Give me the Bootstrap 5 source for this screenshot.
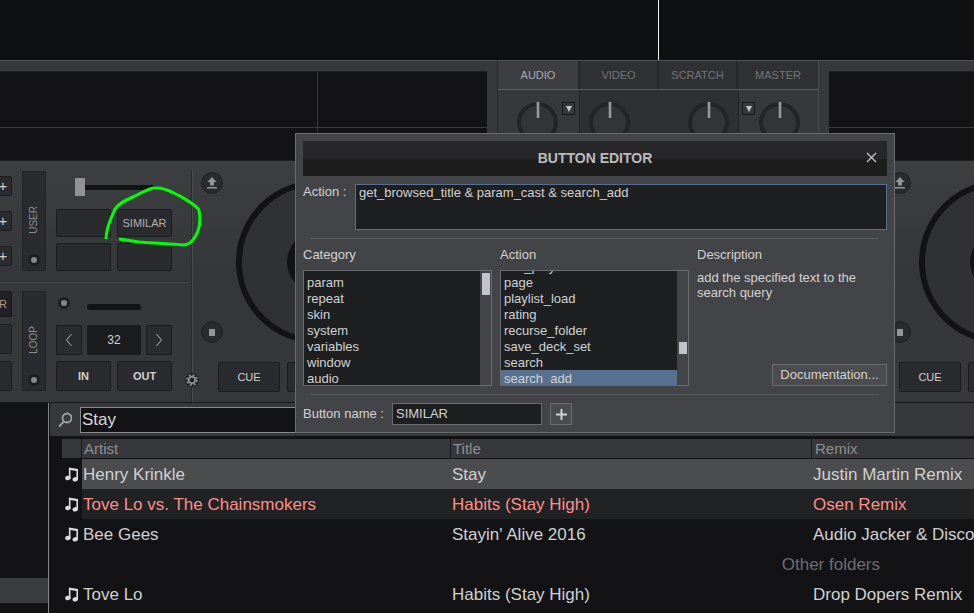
<!DOCTYPE html>
<html lang="en">
<head>
<meta charset="utf-8">
<meta name="viewport" content="width=device-width, initial-scale=1">
<title>Button Editor</title>
<link href="https://cdn.jsdelivr.net/npm/bootstrap@5.3.0/dist/css/bootstrap.min.css" rel="stylesheet">
<style>
  :root { --panel:#37383b; --well:#131315; --key:#2a2b2e; --edge:#1b1c1d; --field:#1d1f21; --rim:#6a6b6e; }
  body { font-family:"Liberation Sans",Arial,sans-serif; font-size:13px; line-height:16px; color:#d0d0d0; background:#131315; }
  button, input, textarea { font-family:inherit; }
  .app { min-height:100vh; overflow:hidden; }

  .waveform { height:60px; background:#0f1012; }
  .wave-gap { flex:658 1 0; border-right:1px solid #f0f0f0; }
  .wave-rest { flex:315 1 0; }

  .top-row { display:grid; grid-template-columns:minmax(0,487fr) 342px minmax(0,145fr); height:101px; border-top:1px solid #515255; background:var(--panel); }
  .screen { margin-top:10px; background:var(--well); border-top:1px solid #1f2022; border-bottom:1px solid #1f2022; }
  .screen-main { height:56px; border-bottom:1px solid #38393c; }
  .screen-split { flex:317 1 0; border-right:1px solid #38393c; }
  .screen-end { flex:169 1 0; }
  .mixer { margin:0 10px; border-left:1px solid #28292b; border-right:1px solid #4b4c4f; }
  .mix-tabs { height:29px; border-bottom:1px solid #5b5c5f; display:grid; grid-template-columns:82fr 79fr 79fr 80fr; }
  .mix-tab { border:0; border-right:2px solid #27282a; border-radius:0; background:#303134; color:#737476; font-size:11px; padding:0; }
  .mix-tab.active { background:#3d3e41; color:#aaabad; }
  .mix-tab:last-child { border-right:0; }
  .mix-body { height:70px; padding-top:12px; overflow:hidden; }
  .mix-side { width:81px; padding:0 4px; gap:4px; }
  .mix-side.mix-side-end { width:79px; padding:0 3px; }
  .mix-mid { background:#2f3033; border-left:1px solid #222325; border-right:1px solid #222325; margin-top:-12px; padding:12px 9px 0; }
  .dial { width:41px; height:41px; flex:none; border-radius:50%; border:4px solid #232426; background:#333437; display:flex; justify-content:center; }
  .dial-mark { width:4px; height:16px; margin-top:-4px; background:#98999b; border:solid #4f5052; border-width:0 1px; }
  .drop { width:13px; height:13px; border:1px solid #18191a; background:#37383a; padding:0; display:flex; align-items:center; justify-content:center; }

  .deck-row { display:grid; grid-template-columns:minmax(0,881fr) minmax(0,93fr); height:242px; border-bottom:1px solid #18191a; background:linear-gradient(#3d3e40,#353639 50%,#37383b); overflow:hidden; }
  .controls { width:193px; flex:none; padding-top:8px; }
  .controls-inner { height:233px; border-right:1px solid #4a4b4e; box-shadow:inset -1px 0 #2a2b2d; }
  .bank { height:112px; padding-top:2px; gap:10px; }
  .bank-loop { border-top:1px solid #4a4b4e; box-shadow:0 -1px #2a2b2d; height:121px; padding-top:8px; margin-top:1px; }
  .key { background:var(--key); border:1px solid var(--edge); border-radius:2px; color:#d0d0d0; font-size:11px; line-height:12px; padding:0; display:flex; align-items:center; justify-content:center; }
  .stubs { width:18px; height:100px; margin-left:-6px; }
  .stubs.plus-stubs { gap:15px; padding-top:5px; }
  .stubs .key { height:20px; font-size:15px; }
  .stubs .key.tall { height:30px; }
  .stubs .key.lit { height:26px; font-size:11px; background:#202123; border-color:#18191a; color:#b8958c; }
  .strip { width:24px; height:100px; background:var(--key); border:1px solid #222325; color:#8c8d8f; font-size:10px; gap:20px; padding-bottom:4px; }
  .strip span { writing-mode:vertical-rl; transform:rotate(180deg); line-height:12px; }
  .led { width:12px; height:12px; border-radius:50%; border:3px solid #1d1e1f; background:#858688; flex:none; }
  .pads { width:116px; height:100px; }
  .fader { appearance:none; width:78px; height:18px; margin:7px 0 0 19px; background:linear-gradient(#131315,#131315) center/100% 5px no-repeat; }
  .fader::-webkit-slider-thumb { appearance:none; width:10px; height:18px; background:#929294; }
  .pad-grid { display:grid; grid-template-columns:1fr 1fr; gap:6px; }
  .pad-grid .key { height:28px; color:#aeafb1; }
  .pad-grid .key.big { height:30px; font-weight:bold; color:#d0d0d0; }
  .loop-top { padding:6px 0 0 2px; gap:17px; margin-bottom:15px; }
  .slot { width:54px; height:6px; margin-top:7px; border-radius:3px; background:#131315; }
  .loop-grid { display:grid; grid-template-columns:26px 54px 26px; gap:5px; margin-bottom:6px; }
  .loop-grid .key { height:30px; }
  .loop-grid .size-key { font-size:12px; background:#1b1c1e; }
  .gear { width:14px; flex:none; margin-left:-8px; padding-bottom:15px; z-index:1; }

  .transport { padding-top:11px; }
  .transport.left-side { padding-left:2px; }
  .transport.right-side { padding-left:8px; }
  .side { height:171px; width:22px; flex:none; }
  .round { width:22px; height:22px; border-radius:50%; border:1px solid #1f2022; background:var(--key); padding:0; display:flex; align-items:center; justify-content:center; }
  .stop { width:6px; height:7px; background:#949597; }
  .jog { width:164px; height:164px; flex:none; border-radius:50%; border:6px solid #131315; background:#303134; display:flex; align-items:center; justify-content:center; margin:8px 0 0 13px; }
  .right-side .jog { margin-left:8px; }
  .hub { width:62px; height:62px; border-radius:50%; background:#131315; }
  .cue-row { margin:18px 0 0 17px; gap:7px; }
  .right-side .cue-row { margin-left:10px; }
  .cue-row .key { width:62px; height:30px; flex:none; }

  .library { min-height:210px; flex:1 1 auto; }
  .tree { width:49px; flex:none; border-right:1px solid #85868a; padding-top:175px; margin-right:1px; }
  .tree-item { height:25px; width:100%; border:0; background:#3b3c3e; display:block; }
  .search-bar { height:33px; background:var(--panel); padding:4px 0 3px 8px; gap:8px; }
  .search-input { width:60%; height:26px; background:#131315; border:1px solid #8a8b8e; color:#d8d8d8; font-size:17px; padding:0 1px; }
  .tracks { table-layout:fixed; width:100%; margin:3px 0 0; border-collapse:separate; border-spacing:0; font-size:17px; }
  .tracks th { height:20px; padding:0 2px; font-size:15px; line-height:19px; font-weight:normal; color:#8e8f91; background:var(--panel); border-right:1px solid #19191b; border-bottom:1px solid #131315; }
  .tracks th:last-child { border-right:0; padding-left:3px; }
  .col-note { width:20px; }
  .col-artist { width:369px; }
  .col-title { width:361px; }
  .tracks td { height:30px; padding:2px 1px 0; line-height:28px; white-space:nowrap; overflow:hidden; }
  .tracks .chosen td:not(:first-child) { background:#4b4c4d; }
  .tracks .played td:not(:first-child) { background:#212223; color:#ff8e8b; }
  .tracks .more td { color:#6d6e70; padding-right:94px; }
  .tracks .note-cell { padding:0 0 0 3px; line-height:0; }
  .list-wrap { padding-left:12px; }

  .editor { position:absolute; left:295px; top:133px; width:600px; background:#434447; border:1px solid var(--rim); padding:7px; z-index:5; color:#d2d2d2; }
  .editor-head { height:35px; background:linear-gradient(#272729 50%,#1d1d1e 50%); display:grid; grid-template-columns:32px 1fr 32px; align-items:center; padding-bottom:2px; }
  .editor-head h1 { font-size:14px; line-height:16px; color:#bcbcbd; }
  .close-key { border:0; background:none; padding:0; line-height:0; }
  .action-text { height:46px; background:var(--field); border:1px solid #586f92; color:#d2d2d2; font-size:13px; line-height:15px; padding:0 3px; resize:none; display:block; }
  .action-label { width:52px; flex:none; }
  .rule { height:1px; background:#58595c; margin:0 8px; }
  .pick { width:189px; flex:none; }
  .pick h2, .desc h2 { font-size:13px; line-height:16px; margin:0 0 7px; font-weight:normal; }
  .pick-box { height:116px; border:1px solid var(--rim); background:var(--field); overflow:hidden; }
  .pick-list { padding-top:3px; }
  .pick-list.scrolled { padding-top:0; }
  .pick-item { display:block; width:100%; height:16px; flex:none; border:0; background:none; color:#d2d2d2; text-align:left; font-size:13px; line-height:14px; padding:2px 3px 0; }
  .pick-item.active { background:#57708f; }
  .peek { height:3px; overflow:hidden; display:flex; align-items:end; }
  .track { width:11px; flex:none; background:#434447; padding:2px 1px 0 2px; }
  .thumb { height:22px; background:#c3c4c9; }
  .thumb.small-thumb { height:12px; margin-top:69px; }
  .desc p { line-height:15px; margin:0; }
  .flat { background:#4b4c4f; border:1px solid var(--rim); color:#d2d2d2; padding:0; height:22px; }
  .doc { width:115px; font-size:13px; line-height:18px; }
  .name-input { width:150px; height:22px; background:var(--field); border:1px solid var(--rim); color:#d2d2d2; font-size:13px; padding:0 3px 2px; }
  .name-label { width:89px; flex:none; }
  .plus { width:22px; line-height:0; }
  .scribble { position:absolute; left:100px; top:180px; z-index:4; pointer-events:none; }
</style>
<script src="https://cdn.jsdelivr.net/npm/bootstrap@5.3.0/dist/js/bootstrap.bundle.min.js"></script>
</head>
<body>
<svg width="0" height="0" class="d-none">
  <symbol id="note" viewBox="0 0 14 15"><path d="M4.700 11.500V1.500M12.200 3V12.500" fill="none" stroke="#dcdcdc" stroke-width="1.600"/><path d="M3.900 .5L13 2V4.200L3.900 2.700Z" fill="#dcdcdc"/><ellipse cx="2.900" cy="11" rx="2.800" ry="2.200" fill="#dcdcdc" transform="rotate(-12 2.900 11)"/><ellipse cx="10.300" cy="12.300" rx="2.800" ry="2.200" fill="#dcdcdc" transform="rotate(-12 10.300 12.300)"/></symbol>
  <symbol id="eject" viewBox="0 0 10 12"><path d="M5 0L9.700 5H7V8.500H3V5H.3ZM0 10H10V11.600H0Z" fill="#949597"/></symbol>
</svg>
<div class="app d-flex flex-column position-relative">
  <div class="waveform d-flex"><div class="wave-gap"></div><div class="wave-rest"></div></div>

  <div class="top-row">
    <div class="screen">
      <div class="screen-main d-flex"><div class="screen-split"></div><div class="screen-end"></div></div>
      <div class="d-flex"><div class="screen-split pt-4"></div><div class="screen-end"></div></div>
    </div>
    <div class="mixer">
      <div class="mix-tabs">
        <button type="button" class="mix-tab active">AUDIO</button>
        <button type="button" class="mix-tab">VIDEO</button>
        <button type="button" class="mix-tab">SCRATCH</button>
        <button type="button" class="mix-tab">MASTER</button>
      </div>
      <div class="mix-body d-flex">
        <div class="mix-side d-flex justify-content-end">
          <div class="dial"><div class="dial-mark"></div></div>
          <button type="button" class="drop" aria-label="Left options"><svg width="6" height="6"><path d="M0 0H6L3 6Z" fill="#c4c4c4"/></svg></button>
        </div>
        <div class="mix-mid d-flex justify-content-between flex-grow-1">
          <div class="dial"><div class="dial-mark"></div></div>
          <div class="dial"><div class="dial-mark"></div></div>
        </div>
        <div class="mix-side mix-side-end d-flex">
          <button type="button" class="drop" aria-label="Right options"><svg width="6" height="6"><path d="M0 0H6L3 6Z" fill="#c4c4c4"/></svg></button>
          <div class="dial"><div class="dial-mark"></div></div>
        </div>
      </div>
    </div>
    <div class="screen"><div class="screen-main"></div></div>
  </div>

  <div class="deck-row">
    <div class="d-flex overflow-hidden">
      <div class="controls">
        <div class="controls-inner">
          <div class="bank d-flex">
            <div class="stubs plus-stubs d-flex flex-column">
              <button type="button" class="key">+</button>
              <button type="button" class="key">+</button>
              <button type="button" class="key">+</button>
            </div>
            <div class="strip d-flex flex-column align-items-center justify-content-end">
              <span>USER</span><div class="led"></div>
            </div>
            <div class="pads d-flex flex-column justify-content-between">
              <input type="range" class="fader" value="0" aria-label="User level">
              <div class="pad-grid">
                <button type="button" class="key" aria-label="Pad 1"></button>
                <button type="button" class="key">SIMILAR</button>
                <button type="button" class="key" aria-label="Pad 3"></button>
                <button type="button" class="key" aria-label="Pad 4"></button>
              </div>
            </div>
          </div>
          <div class="bank bank-loop d-flex me-1">
            <div class="stubs d-flex flex-column justify-content-between">
              <button type="button" class="key lit">R</button>
              <button type="button" class="key tall" aria-label="Pad left"></button>
              <button type="button" class="key tall" aria-label="Pad right"></button>
            </div>
            <div class="strip d-flex flex-column align-items-center justify-content-end">
              <span>LOOP</span><div class="led"></div>
            </div>
            <div class="pads">
              <div class="loop-top d-flex align-items-start">
                <div class="led"></div><div class="slot"></div>
              </div>
              <div class="loop-grid">
                <button type="button" class="key" aria-label="Shorter loop"><svg width="8" height="14"><path d="M6.500 1L1.500 7L6.500 13" fill="none" stroke="#b4b5b7"/></svg></button>
                <button type="button" class="key size-key">32</button>
                <button type="button" class="key" aria-label="Longer loop"><svg width="8" height="14"><path d="M1.500 1L6.500 7L1.500 13" fill="none" stroke="#b4b5b7"/></svg></button>
              </div>
              <div class="pad-grid">
                <button type="button" class="key big">IN</button>
                <button type="button" class="key big">OUT</button>
              </div>
            </div>
          </div>
        </div>
      </div>
      <div class="gear d-flex align-items-end">
        <svg width="14" height="14" viewBox="0 0 14 14"><circle cx="7" cy="7" r="7" fill="#1f2022"/><circle cx="7" cy="7" r="3.300" fill="none" stroke="#8a8b8d" stroke-width="2"/><circle cx="7" cy="7" r="5" fill="none" stroke="#8a8b8d" stroke-width="1.800" stroke-dasharray="2 1.927"/></svg>
      </div>
      <div class="transport left-side">
        <div class="d-flex">
          <div class="side d-flex flex-column justify-content-between">
            <button type="button" class="round" aria-label="Eject"><svg width="10" height="12"><use href="#eject"/></svg></button>
            <button type="button" class="round" aria-label="Stop"><span class="stop"></span></button>
          </div>
          <div class="jog"><div class="hub"></div></div>
        </div>
        <div class="cue-row d-flex"><button type="button" class="key">CUE</button><button type="button" class="key" aria-label="Pause"></button></div>
      </div>
    </div>
    <div class="transport right-side overflow-hidden">
      <div class="d-flex">
        <div class="side d-flex flex-column justify-content-between">
          <button type="button" class="round" aria-label="Eject"><svg width="10" height="12"><use href="#eject"/></svg></button>
          <button type="button" class="round" aria-label="Stop"><span class="stop"></span></button>
        </div>
        <div class="jog"><div class="hub"></div></div>
      </div>
      <div class="cue-row d-flex"><button type="button" class="key">CUE</button><button type="button" class="key" aria-label="Pause"></button></div>
    </div>
  </div>

  <div class="library d-flex">
    <div class="tree"><button type="button" class="tree-item" aria-label="Selected folder"></button></div>
    <div class="flex-grow-1 overflow-hidden">
      <div class="search-bar d-flex align-items-center">
        <svg width="14" height="16" viewBox="0 0 14 16" class="flex-shrink-0"><circle cx="9" cy="6" r="4.500" fill="none" stroke="#a2a3a5" stroke-width="1.800"/><path d="M6 9.500L1 14.500" stroke="#a2a3a5" stroke-width="1.800"/></svg>
        <input class="search-input" type="text" value="Stay" aria-label="Search">
      </div>
      <div class="list-wrap">
        <table class="tracks">
          <colgroup><col class="col-note"><col class="col-artist"><col class="col-title"><col></colgroup>
          <thead><tr><th></th><th>Artist</th><th>Title</th><th>Remix</th></tr></thead>
          <tbody>
            <tr class="chosen"><td class="note-cell"><svg width="14" height="15"><use href="#note"/></svg></td><td>Henry Krinkle</td><td>Stay</td><td>Justin Martin Remix</td></tr>
            <tr class="played"><td class="note-cell"><svg width="14" height="15"><use href="#note"/></svg></td><td>Tove Lo vs. The Chainsmokers</td><td>Habits (Stay High)</td><td>Osen Remix</td></tr>
            <tr><td class="note-cell"><svg width="14" height="15"><use href="#note"/></svg></td><td>Bee Gees</td><td>Stayin' Alive 2016</td><td>Audio Jacker &amp; Disco</td></tr>
            <tr class="more"><td colspan="4" class="text-end">Other folders</td></tr>
            <tr><td class="note-cell"><svg width="14" height="15"><use href="#note"/></svg></td><td>Tove Lo</td><td>Habits (Stay High)</td><td>Drop Dopers Remix</td></tr>
          </tbody>
        </table>
      </div>
    </div>
  </div>

  <svg class="scribble" width="106" height="72" viewBox="100 180 106 72"><path d="M106 239C106 227 112 216 115 209C119 203 126 200 133 197C142 193 148 188 155 188C167 187 174 194 180 196C188 201 196 205 199 210C201 221 199 231 195 237C191 244 187 245 183 245C170 244 151 243 139 242L119 239" fill="none" stroke="#00ff00" stroke-width="3"/></svg>

  <section class="editor" role="dialog" aria-labelledby="editor-title">
    <div class="editor-head">
      <span></span>
      <h1 id="editor-title" class="m-0 text-center fw-bold">BUTTON EDITOR</h1>
      <button type="button" class="close-key" aria-label="Close"><svg width="11" height="11"><path d="M1 1L10 10M10 1L1 10" stroke="#c4c4c5" stroke-width="1.300"/></svg></button>
    </div>
    <div class="d-flex mt-2 mb-2">
      <label class="action-label" for="action">Action :</label>
      <textarea id="action" class="action-text flex-grow-1" spellcheck="false">get_browsed_title &amp; param_cast &amp; search_add</textarea>
    </div>
    <div class="rule"></div>
    <div class="d-flex gap-2 mt-2 mb-2">
      <div class="pick">
        <h2>Category</h2>
        <div class="pick-box d-flex">
          <div class="pick-list flex-grow-1">
            <button type="button" class="pick-item">param</button>
            <button type="button" class="pick-item">repeat</button>
            <button type="button" class="pick-item">skin</button>
            <button type="button" class="pick-item">system</button>
            <button type="button" class="pick-item">variables</button>
            <button type="button" class="pick-item">window</button>
            <button type="button" class="pick-item">audio</button>
          </div>
          <div class="track"><div class="thumb"></div></div>
        </div>
      </div>
      <div class="pick">
        <h2>Action</h2>
        <div class="pick-box d-flex">
          <div class="pick-list scrolled flex-grow-1">
            <div class="peek"><button type="button" class="pick-item">mix_play</button></div>
            <button type="button" class="pick-item">page</button>
            <button type="button" class="pick-item">playlist_load</button>
            <button type="button" class="pick-item">rating</button>
            <button type="button" class="pick-item">recurse_folder</button>
            <button type="button" class="pick-item">save_deck_set</button>
            <button type="button" class="pick-item">search</button>
            <button type="button" class="pick-item active">search_add</button>
          </div>
          <div class="track"><div class="thumb small-thumb"></div></div>
        </div>
      </div>
      <div class="desc flex-grow-1 d-flex flex-column">
        <h2>Description</h2>
        <p>add the specified text to the search query</p>
        <button type="button" class="flat doc mt-auto ms-auto">Documentation...</button>
      </div>
    </div>
    <div class="rule"></div>
    <div class="d-flex align-items-center mt-2">
      <label class="name-label" for="bname">Button name :</label>
      <input id="bname" class="name-input me-2" type="text" value="SIMILAR">
      <button type="button" class="flat plus" aria-label="Add"><svg width="11" height="11"><path d="M5.500 0V11M0 5.500H11" stroke="#d2d2d2" stroke-width="2"/></svg></button>
    </div>
  </section>
</div>
</body>
</html>
